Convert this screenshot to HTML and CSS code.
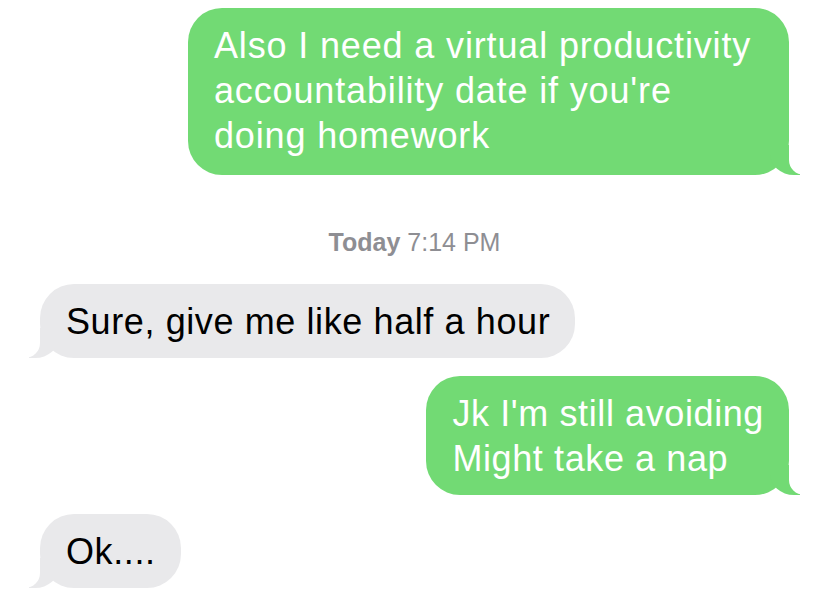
FILE: index.html
```html
<!DOCTYPE html>
<html lang="en">
<head>
<meta charset="utf-8">
<title>Messages</title>
<link rel="stylesheet" href="styles.css">
</head>
<body>
<div class="thread">
  <div class="bubble sent first">Also I need a virtual productivity accountability date if you're doing homework</div>
  <div class="stamp"><span class="day">Today</span> 7:14 PM</div>
  <div class="bubble received">Sure, give me like half a hour</div>
  <div class="bubble sent gap">Jk I'm still avoiding<br>Might take a nap</div>
  <div class="bubble received gap">Ok....</div>
</div>
</body>
</html>
```
FILE: styles.css
```css
html, body {
  margin: 0;
  padding: 0;
  background: #ffffff;
}

.thread {
  display: flex;
  flex-direction: column;
  padding: 8px 39px 0 40px;
  font-family: "Liberation Sans", Arial, sans-serif;
}

.bubble {
  position: relative;
  max-width: 550px;
  width: fit-content;
  padding: 15px 25px 14px 26px;
  border-radius: 34px;
  font-size: 36px;
  line-height: 45px;
  letter-spacing: 0.6px;
}

.first {
  padding-bottom: 17px;
  letter-spacing: 0.85px;
}

.sent {
  align-self: flex-end;
  background: #72da74;
  color: #ffffff;
}

.received {
  align-self: flex-start;
  background: #e9e9eb;
  color: #000000;
}

.gap {
  margin-top: 18px;
}

.received.gap {
  margin-top: 19px;
}

/* tails */
.bubble::before,
.bubble::after {
  content: "";
  position: absolute;
  bottom: 0;
  height: 30px;
}

.sent::before {
  right: -11px;
  width: 30px;
  background: #72da74;
  border-bottom-left-radius: 24px 21px;
}

.sent::after {
  right: -15px;
  width: 15px;
  background: #ffffff;
  border-bottom-left-radius: 15px;
}

.received::before {
  left: -11px;
  width: 30px;
  background: #e9e9eb;
  border-bottom-right-radius: 24px 21px;
}

.received::after {
  left: -15px;
  width: 15px;
  background: #ffffff;
  border-bottom-right-radius: 15px;
}

.stamp {
  margin: 52px 0 27px;
  text-align: center;
  font-size: 25px;
  line-height: 30px;
  color: #8e8e93;
}

.day {
  font-weight: bold;
}
```
